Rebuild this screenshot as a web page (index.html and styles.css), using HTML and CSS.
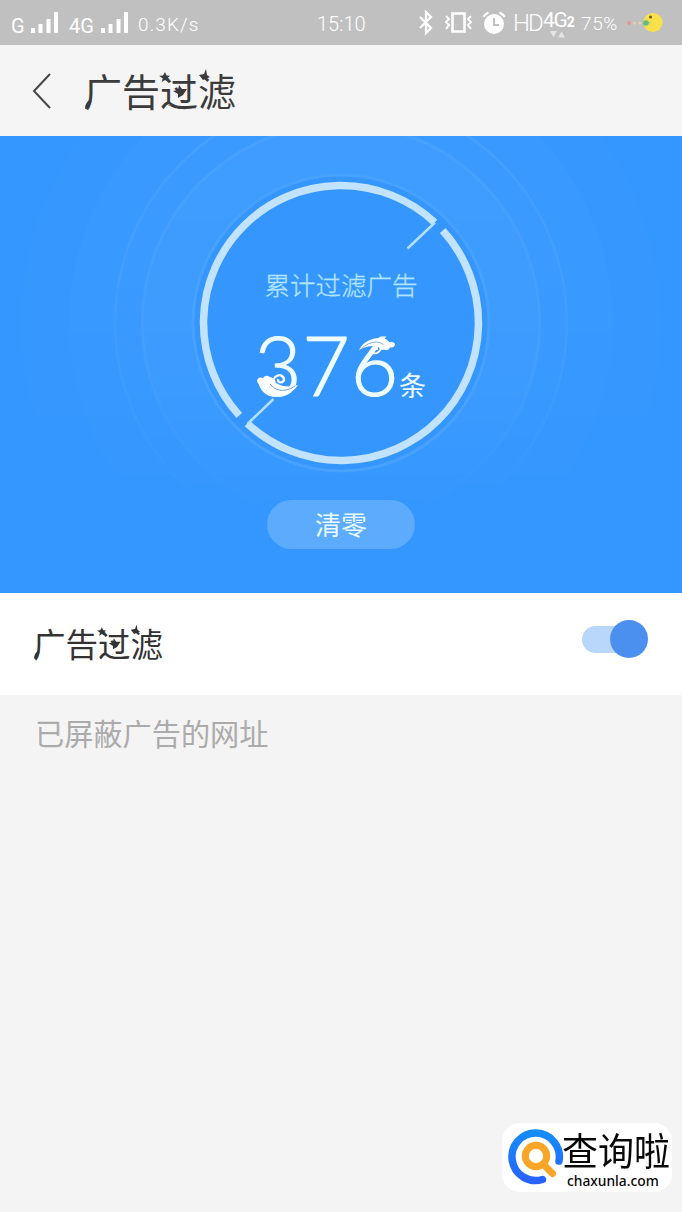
FILE: index.html
```html
<!DOCTYPE html>
<html lang="zh-CN">
<head>
<meta charset="utf-8">
<title>广告过滤</title>
<link rel="stylesheet" href="styles.css">
</head>
<body>
<div class="screen">
  <div class="status">
    <div class="status-left">
      <span class="net">G</span>
      <svg class="bars" width="28" height="22" viewBox="0 0 28 22" fill="#fff"><path d="M0 16h4v5H0zM7.500 12h4v9h-4zM15.500 7h4v14h-4zM23 0h4v21h-4z"/></svg>
      <span class="net net-4g">4G</span>
      <svg class="bars" width="28" height="22" viewBox="0 0 28 22" fill="#fff"><path d="M0 16h4v5H0zM7.500 12h4v9h-4zM15.500 7h4v14h-4zM23 0h4v21h-4z"/></svg>
      <span class="speed">0.3K/s</span>
    </div>
    <span class="clock">15:10</span>
    <div class="status-right">
      <svg class="bt" width="16" height="26" viewBox="0 0 16 26" fill="none" stroke="#fff" stroke-width="2.300"><path d="M2 7l11 11-5 5V2l5 5L2 18"/></svg>
      <svg class="vibrate" width="28" height="24" viewBox="0 0 28 24" fill="none" stroke="#fff" stroke-width="2"><path d="M7.500 2.500h12v18h-12z" stroke-width="2.500"/><path d="M1 5l3 3-3 3 3 3-3 4M26 5l-3 3 3 3-3 3 3 4"/></svg>
      <svg class="alarm" width="24" height="24" viewBox="0 0 24 24" fill="none" stroke="#fff" stroke-width="2"><circle cx="12" cy="13" r="10" fill="#fff" stroke="none"/><path d="M1.500 6Q3 3 6.500 1.500M22.500 6Q21 3 17.500 1.500"/><path d="M12 7v7h5" stroke="#c0c0c0"/></svg>
      <span class="hd">HD</span>
      <span class="net2">4G<b>2</b>
        <svg class="arrows" width="16" height="7" viewBox="0 0 16 7" fill="#e4e4e4"><path d="M0 0h7L3.500 6zM8 6.500h7L11.500 .5z"/></svg>
      </span>
      <span class="battery">75%</span>
      <svg class="pac" width="38" height="22" viewBox="0 0 38 22"><circle cx="26" cy="10.500" r="9.500" fill="#f9e04b"/><path d="M15 9.500l10 1-9 3z" fill="#a9cf84"/><circle cx="2" cy="11" r="2" fill="#dd9c98"/><circle cx="7.500" cy="11" r="1.500" fill="#e8ccb4"/><circle cx="13" cy="11" r="1.500" fill="#e6d9a0"/><circle cx="19" cy="11" r="2.800" fill="#5fbd87"/><circle cx="23.500" cy="5" r="1.500" fill="#75512b"/></svg>
    </div>
  </div>

  <div class="header">
    <svg class="back" width="22" height="38" viewBox="0 0 22 38" fill="none" stroke="#474747" stroke-width="2"><path d="M19 2L3 19l16 17"/></svg>
    <div class="title">广告过滤
      <svg class="ornament" width="154" height="46" viewBox="0 0 154 46" fill="#3b3b3b"><path d="M1 42q0-7 6-10 2 6-6 10zM81 5l1.500 3.500 3.500.3-2.700 2.500.8 3.700-3.100-2-3.200 2 .9-3.700L75 8.800l4-.3zM89 24l5-1 1-5 3 4 5 0-4 6-5 3 0-4zM115 8l5-1 2-5 1 6 3 2-7 3zM78 35q14 8 36 4-16 8-36-4z"/></svg>
    </div>
  </div>

  <div class="hero">
    <svg class="rings" width="682" height="457" viewBox="0 0 682 457" fill="none">
      <defs>
        <linearGradient id="fade" x1="0" y1="0" x2="0" y2="1"><stop offset="0" stop-color="#fff"/><stop offset=".5" stop-color="#fff" stop-opacity=".75"/><stop offset=".84" stop-color="#fff" stop-opacity="0"/></linearGradient>
        <mask id="lower"><rect width="682" height="456" fill="url(#fade)"/></mask>
      </defs>
      <g mask="url(#lower)">
        <circle cx="341" cy="187" r="320" fill="#fff" fill-opacity=".01"/>
        <circle cx="341" cy="187" r="272" fill="#fff" fill-opacity=".02"/>
        <circle cx="341" cy="187" r="226" fill="#fff" fill-opacity=".012" stroke="#fff" stroke-opacity=".06" stroke-width="2.500"/>
        <circle cx="341" cy="187" r="199" fill="#fff" fill-opacity=".03" stroke="#fff" stroke-opacity=".05" stroke-width="3"/>
      </g>
      <circle cx="341" cy="187" r="148" fill="#3597fe" stroke="#47a1ff" stroke-width="3"/>
      <g stroke="#c2e3ff" stroke-width="7.500">
        <path d="M239.300 279.500A137.500 137.500 0 0 1 243.800 89.800A137.500 137.500 0 0 1 434.700 86.400"/>
        <path d="M442.700 94.500A137.500 137.500 0 0 1 438.200 284.200A137.500 137.500 0 0 1 247.300 287.600"/>
      </g>
      <path d="M435 86.500L407.500 112.500M247.500 288l26-25" stroke="#b3e0ff" stroke-width="2.500"/>
    </svg>
    <div class="caption">累计过滤广告</div>
    <div class="count"><span class="digits">376</span><span class="unit">条</span>
      <svg class="clouds" width="170" height="76" viewBox="0 0 170 76">
        <g id="cloud"><path d="M0 58q1-5 6-3 3-4 7-1 5 1 6 6 10 6 22 2-6 10-19 10-13-1-16-10-5 0-6-4z" fill="#fff"/><path d="M17 63c-4-11 9-14 10-7 0 5-7 4-6 0" fill="none" stroke="#fff" stroke-width="2.300"/><path d="M13 61q6 8 16 6 5-1 9-4" fill="none" stroke="#5c9cd4" stroke-width=".9"/></g>
        <use href="#cloud" transform="matrix(-.866 .219 -.12 -.74 145 63.900)"/>
      </svg>
    </div>
    <div class="clear">清零</div>
  </div>

  <div class="setting">
    <div class="setting-name">广告过滤
      <svg class="ornament" width="131" height="39" viewBox="0 0 154 46" fill="#333"><path d="M1 42q0-7 6-10 2 6-6 10zM81 5l1.500 3.500 3.500.3-2.700 2.500.8 3.700-3.100-2-3.200 2 .9-3.700L75 8.800l4-.3zM89 24l5-1 1-5 3 4 5 0-4 6-5 3 0-4zM115 8l5-1 2-5 1 6 3 2-7 3zM78 35q14 8 36 4-16 8-36-4z"/></svg>
    </div>
    <div class="toggle"><div class="knob"></div></div>
  </div>

  <div class="section">已屏蔽广告的网址</div>

  <div class="brand">
    <svg class="logo" width="56" height="58" viewBox="0 0 56 58" fill="none" stroke-linecap="round">
      <defs><linearGradient id="blue" x1="0" y1="0" x2="0" y2="1"><stop offset="0" stop-color="#168cf8"/><stop offset="1" stop-color="#2962ff"/></linearGradient></defs>
      <path d="M34.500 51.500A23.700 23.700 0 1 1 51 33" stroke="url(#blue)" stroke-width="7.500"/>
      <circle cx="28" cy="28" r="10.700" stroke="#f8a528" stroke-width="7"/>
      <path d="M36 37l8.500 8.500" stroke="#f8a528" stroke-width="7"/>
    </svg>
    <div class="brand-text"><div class="brand-name">查询啦</div><div class="brand-url">chaxunla.com</div></div>
  </div>
</div>
</body>
</html>
```

FILE: styles.css
```css
* { box-sizing: border-box; }
body { margin: 0; }
svg { display: block; flex: none; }

.screen {
  position: relative;
  width: 682px;
  height: 1212px;
  background: #f4f4f4;
  overflow: hidden;
  font-family: "Noto Sans CJK SC", sans-serif;
}

.status {
  display: flex;
  align-items: center;
  height: 45px;
  background: #c0c0c0;
  color: #fff;
  font-family: Roboto, sans-serif;
  white-space: nowrap;
}
.status-left { display: flex; align-items: center; width: 317px; padding: 3px 0 0 11px; }
.net { width: 20px; font-size: 20px; line-height: 24px; padding-top: 3px; }
.bars { margin-bottom: 2px; }
.net-4g { width: 32px; margin-left: 10px; }
.speed { margin-left: 9px; font-size: 19px; font-weight: 300; letter-spacing: 1.1px; }
.clock { width: 101px; padding-top: 3px; font-size: 20px; font-weight: 300; }
.status-right { display: flex; align-items: center; }
.vibrate { margin-left: 11px; }
.alarm { margin-left: 9px; }
.hd { width: 30px; margin-left: 7px; font-size: 24px; font-weight: 300; letter-spacing: -2px; }
.net2 { position: relative; width: 38px; padding-bottom: 5px; font-size: 21px; letter-spacing: -1.2px; }
.net2 b { font-size: 14px; font-weight: 700; }
.arrows { position: absolute; left: 7px; top: 23px; }
.battery { width: 46px; padding-top: 2px; font-size: 19px; font-weight: 300; letter-spacing: .6px; }

.header {
  display: flex;
  align-items: center;
  height: 91px;
  padding-left: 31px;
  background: #f5f5f5;
}
.title {
  position: relative;
  margin: 0 0 2px 31px;
  font-size: 38px;
  font-weight: 400;
  line-height: 46px;
  color: #3b3b3b;
}
.ornament { position: absolute; left: 0; top: 0; }

.hero {
  position: relative;
  display: flex;
  flex-direction: column;
  align-items: center;
  height: 457px;
  padding-top: 129px;
  background: #3497ff;
}
.rings { position: absolute; left: 0; top: 0; }
.caption {
  position: relative;
  font-size: 25.500px;
  font-weight: 300;
  line-height: 38px;
  color: #b2e4ff;
  -webkit-text-stroke: .3px #b2e4ff;
}
.count {
  position: relative;
  display: flex;
  align-items: flex-end;
  width: 170px;
  height: 76px;
  margin-top: 20px;
  margin-left: 2px;
  color: #effcff;
}
.digits {
  margin-left: -3px;
  padding-top: 6px;
  margin-bottom: -3px;
  font-family: Lato, sans-serif;
  font-size: 82px;
  font-weight: 300;
  line-height: 76px;
  letter-spacing: .8px;
  -webkit-text-stroke: 1.2px #effcff;
}
.unit { font-size: 27px; font-weight: 400; line-height: 28px; }
.clouds { position: absolute; left: 0; top: 0; }
.clear {
  position: relative;
  width: 148px;
  height: 49px;
  margin-top: 101px;
  border-radius: 25px;
  background: #5dabfc;
  color: #e9fbff;
  font-size: 26px;
  line-height: 47px;
  text-align: center;
}

.setting {
  display: flex;
  align-items: center;
  justify-content: space-between;
  height: 102px;
  padding: 0 34px 0 33px;
  background: #fff;
}
.setting-name {
  position: relative;
  margin-bottom: 2px;
  font-size: 32.500px;
  line-height: 40px;
  font-weight: 400;
  color: #333;
}
.toggle {
  display: flex;
  align-items: center;
  justify-content: flex-end;
  width: 66px;
  height: 27px;
  margin-bottom: 10px;
  border-radius: 14px;
  background: linear-gradient(to right, #b9d6fb 50px, transparent 50px);
}
.knob { width: 38px; height: 38px; flex: none; border-radius: 50%; background: #4c90ef; }

.section {
  padding: 15px 0 0 35px;
  font-size: 29.200px;
  font-weight: 400;
  line-height: 44px;
  color: #ababab;
}

.brand {
  position: absolute;
  left: 502px;
  top: 1123px;
  display: flex;
  width: 170px;
  height: 69px;
  padding: 5px 0 0 6px;
  border-radius: 18px;
  background: #fff;
}
.brand-text { color: #080808; }
.brand-name { height: 40px; margin-left: -2px; font-size: 36px; line-height: 40px; white-space: nowrap; transform: scaleY(1.05); transform-origin: 0 30%; }
.brand-url { margin: 4px 0 0 3px; font-family: "Noto Sans", sans-serif; font-size: 13.800px; font-weight: 500; line-height: 18px; }
```
